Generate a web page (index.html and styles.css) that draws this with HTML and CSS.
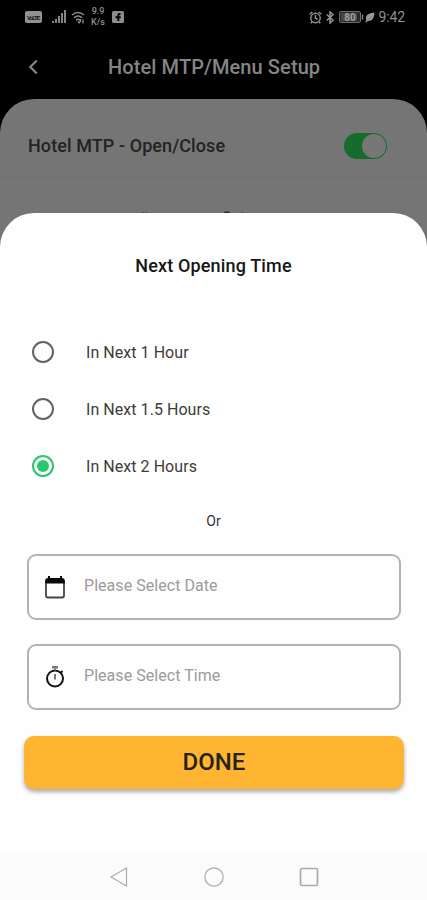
FILE: index.html
```html
<!DOCTYPE html>
<html lang="en">
<head>
<meta charset="utf-8">
<title>Hotel MTP/Menu Setup</title>
<link rel="stylesheet" href="styles.css">
</head>
<body>
<div class="screen">
  <header class="status">
    <svg class="ic-volte" width="17" height="12" viewBox="0 0 17 12"><rect width="17" height="12" rx="2" fill="#929292"/><text x="8.5" y="8.6" text-anchor="middle" textLength="13" class="volte-text">VoLTE</text></svg>
    <svg class="ic-signal" width="15" height="14" viewBox="0 0 15 14" fill="#858585"><path d="M0 11h2v2H0zM3 9h2v4H3zM6 6h2v7H6zM9 3h2v10H9zM12 0h2v13h-2z"/></svg>
    <svg class="ic-wifi" width="14" height="13" viewBox="0 0 14 13" fill="none" stroke="#8c8c8c" stroke-width="1.5"><path d="M1 4q6-5 12 0M3 6.700q4-3.500 8 0M5 9.200q2-1.800 4 0"/><path d="M7 10.500L9 12" stroke-width="1.600"/><path d="M9.500 8v3M12 8.500v4" stroke-width="1.300"/></svg>
    <div class="speed"><span>9.9</span><span>K/s</span></div>
    <svg class="ic-app" width="12" height="12" viewBox="0 0 12 12"><rect width="12" height="12" rx="1.500" fill="#8d8d8d"/><path d="M8.500 3H7.500Q6.300 3 6.300 4.200V10M3.500 6.200h5.200" fill="none" stroke="#050505" stroke-width="1.900"/></svg>
    <div class="status-right">
      <svg width="13" height="13" viewBox="0 0 13 13" fill="none" stroke="#949494" stroke-width="1.400"><circle cx="6.500" cy="7" r="4.700"/><path d="M6.500 4v3.300l2.300 1M.7 3.300L3.300 1M12.300 3.300L9.700 1M3 10.800L1.700 12.300M10 10.800l1.300 1.500"/></svg>
      <svg class="ic-bt" width="8" height="13" viewBox="0 0 8 13" fill="none" stroke="#949494" stroke-width="1.500"><path d="M.8 3.500L7 9.300 4 12V1l3 2.700L.8 9.500"/></svg>
      <svg class="ic-batt" width="25" height="12" viewBox="0 0 25 12"><rect x=".5" y=".5" width="21" height="11" rx="1.500" fill="#292929" stroke="#6b6b6b"/><rect x="2" y="2" width="16" height="8" fill="#484848"/><path d="M23.500 3.500v5" stroke="#858585" stroke-width="1.500"/><text x="11" y="9.600" text-anchor="middle" class="batt-text">80</text></svg>
      <svg class="ic-leaf" width="10" height="11" viewBox="0 0 10 11"><path d="M9.500.5Q3 1 1.300 4 .3 6.500 1.300 8L.3 10l1 .5L2.600 9Q6.500 9.500 8.300 6 9.400 3.500 9.500.5z" fill="#9a9a9a"/><path d="M3 8L6.500 4.500" stroke="#666" stroke-width=".5"/></svg>
      <span class="clock">9:42</span>
    </div>
  </header>
  <div class="appbar">
    <svg class="back" width="10" height="16" viewBox="0 0 10 16" fill="none" stroke="#858585" stroke-width="2.200"><path d="M8.800 1.500L2.300 8l6.500 6.500"/></svg>
    <h1>Hotel MTP/Menu Setup</h1>
  </div>
  <main class="page">
    <div class="toggle-row">
      <span class="toggle-label">Hotel MTP - Open/Close</span>
      <span class="switch"><span class="knob"></span></span>
    </div>
    <svg class="peek" width="427" height="3" viewBox="0 0 427 3"><path d="M142 2h2v1h-2zM145 2h2v1h-2zM241 2h2v1h-2z" fill="#555"/><path d="M224 2l1-.5h4l1 .5v1h-6z" fill="#303030"/></svg>
  </main>
  <section class="sheet">
    <h2>Next Opening Time</h2>
    <div class="options">
      <label class="option"><span class="radio"></span><span class="option-text">In Next 1 Hour</span></label>
      <label class="option"><span class="radio"></span><span class="option-text">In Next 1.5 Hours</span></label>
      <label class="option"><span class="radio on"></span><span class="option-text">In Next 2 Hours</span></label>
    </div>
    <p class="or">Or</p>
    <div class="field">
      <svg width="24" height="24" viewBox="0 0 24 24"><path d="M3 7h18v13.500q0 2-2 2H5q-2 0-2-2z" fill="none" stroke="#444" stroke-width="1.800"/><path d="M2.200 8.500V5.500Q2.200 3 4.500 3H5V1h2v2h10V1h2v2h.5q2.300 0 2.300 2.500v3z" fill="#080808"/></svg>
      <span>Please Select Date</span>
    </div>
    <div class="field">
      <svg width="24" height="24" viewBox="0 0 24 24" fill="none"><circle cx="12" cy="13.500" r="8" stroke="#111" stroke-width="2"/><path d="M9 1h6v2.500H9z" fill="#777"/><path d="M12 3.500v2M12 9v5.500" stroke="#777" stroke-width="2"/><path d="M17.500 8l2-2" stroke="#111" stroke-width="2"/></svg>
      <span>Please Select Time</span>
    </div>
    <button class="done">DONE</button>
    <nav class="nav">
      <svg width="20" height="22" viewBox="0 0 20 22"><path d="M2 11L17.500 2v18z"/></svg>
      <svg width="20" height="22" viewBox="0 0 20 22"><circle cx="10" cy="11" r="9.200"/></svg>
      <svg width="20" height="22" viewBox="0 0 20 22"><rect x="1.500" y="2.500" width="17" height="17" rx="1.500" stroke-width="1.700"/></svg>
    </nav>
  </section>
</div>
</body>
</html>
```

FILE: styles.css
```css
* { box-sizing: border-box; }
body { margin: 0; font-family: Roboto, "Liberation Sans", sans-serif; background: #000; }
svg { display: block; flex: none; }
h1, h2, p { margin: 0; font-weight: 500; white-space: nowrap; }
.screen { width: 427px; height: 900px; display: flex; flex-direction: column; overflow: hidden; background: #000; }

.status { height: 34px; flex: none; display: flex; align-items: center; padding: 0 22px 0 25px; color: #8f8f8f; }
.volte-text { font-size: 6px; font-weight: 700; fill: #151515; }
.ic-signal { margin-left: 10px; }
.ic-wifi { margin-left: 4px; }
.speed { width: 16px; margin-left: 5px; display: flex; flex-direction: column; align-items: center; font-size: 9px; line-height: 11px; font-weight: 500; }
.ic-app { margin-left: 6px; }
.status-right { margin-left: auto; display: flex; align-items: center; }
.ic-bt { margin-left: 4px; }
.ic-batt { margin-left: 5px; }
.batt-text { font-size: 10px; font-weight: 700; fill: #a0a0a0; }
.ic-leaf { margin-left: 1px; }
.clock { margin-left: 3px; font-size: 14px; line-height: 16px; letter-spacing: -.1px; }

.appbar { height: 65px; flex: none; display: flex; align-items: center; padding-left: 28px; color: #858585; }
.appbar h1 { margin-left: 70px; font-size: 20px; line-height: 24px; letter-spacing: .1px; }

.page { height: 148px; flex: none; margin-bottom: -34px; background: #757575; border-radius: 34px 34px 0 0; }
.toggle-row { height: 79px; display: flex; align-items: center; justify-content: space-between; padding: 15px 40px 0 28px; border-bottom: 1px solid #6f6f6f; }
.toggle-label { font-size: 18px; font-weight: 500; letter-spacing: .08px; color: #232323; }
.switch { width: 43px; height: 26px; padding: 1px; border-radius: 13px; background: #166c2a; display: flex; justify-content: flex-end; }
.knob { width: 24px; height: 24px; border-radius: 50%; background: #777; }
.peek { margin-top: 32px; }

.sheet { height: 687px; flex: none; position: relative; background: #fefefe; border-radius: 34px 34px 0 0; display: flex; flex-direction: column; }
.sheet h2 { margin-top: 42px; text-align: center; font-size: 18px; line-height: 22px; letter-spacing: .15px; color: #161616; }
.options { margin-top: 46px; }
.option { height: 57px; display: flex; align-items: center; padding-left: 32px; font-size: 16px; letter-spacing: .05px; color: #3c3c3c; }
.option-text { padding-top: 2px; }
.radio { width: 22px; height: 22px; margin-right: 32px; border: 2px solid #636363; border-radius: 50%; display: flex; align-items: center; justify-content: center; }
.radio.on { border-color: #29c76b; }
.radio.on::after { content: ""; width: 12px; height: 12px; border-radius: 50%; background: #29c76b; }
.or { margin-top: 17px; text-align: center; font-size: 14px; line-height: 20px; font-weight: 400; color: #333; }
.field { height: 66px; margin: 23px 26px 0 27px; border: 2px solid #b3b3b3; border-radius: 9px; display: flex; align-items: center; padding-left: 14px; font-size: 16px; color: #9b9b9b; }
.field + .field { margin-top: 24px; }
.field span { margin-left: 17px; letter-spacing: .05px; padding-bottom: 3px; }
.done { height: 53px; margin: 26px 23px 0 24px; padding: 0; border: 0; border-radius: 10px; background: #ffb531; box-shadow: 0 3px 4px rgba(0,0,0,.33); color: #252318; font: 500 24px/53px Roboto, sans-serif; }
.nav { height: 47px; margin-top: auto; background: #fbfbfb; display: flex; justify-content: center; gap: 75px; padding-top: 13px; }
.nav svg { fill: none; stroke: #ababab; stroke-width: 1.2; }
```
